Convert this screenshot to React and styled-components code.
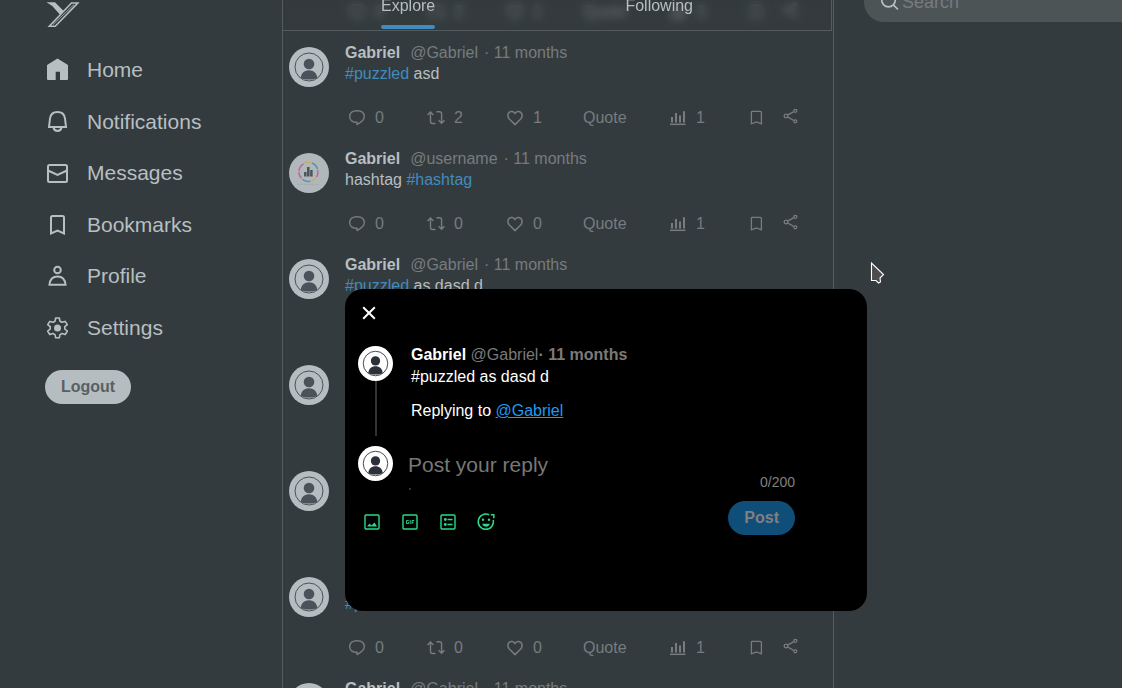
import React from "react";
import styled, { createGlobalStyle } from "styled-components";

const c = {
  bg: "#343b3e",
  text: "#b7bfc2",
  muted: "#767c7f",
  line: "#555c5f",
  blue: "#428bbd",
  field: "#4d5456",
  ink: "#4b5259",
};

const GlobalStyle = createGlobalStyle`
  * { box-sizing: border-box; }
  body {
    margin: 0;
    background: ${c.bg};
    color: ${c.text};
    font-family: "Liberation Sans", Arial, sans-serif;
    font-size: 16px;
    overflow: hidden;
  }
  button { font: inherit; color: inherit; border: 0; background: none; padding: 0; cursor: pointer; }
  a { text-decoration: none; color: inherit; }
  p { margin: 0; }
  svg { display: block; flex: none; }
`;

const Shell = styled.div`
  display: grid;
  grid-template-columns: minmax(0, 282fr) minmax(0, 552fr) minmax(0, 288fr);
  height: 100vh;
  overflow: hidden;
`;

/* ---------- sidebar ---------- */
const Sidebar = styled.header`
  padding: 2px 16px 0 45px;
`;
const Logo = styled.a`
  display: block;
  height: 56px;
`;
const Nav = styled.nav`
  display: flex;
  flex-direction: column;
  justify-content: space-between;
  height: 282px;
`;
const NavLink = styled.a`
  display: flex;
  align-items: center;
  gap: 18px;
  font-size: 21px;
  line-height: 24px;
`;
const Pill = styled.button`
  height: 34px;
  padding: 0 16px;
  border-radius: 17px;
  font-weight: 700;
  background: ${(p) => p.$bg};
  color: ${(p) => p.$fg};
`;
const LogoutButton = styled(Pill)`
  margin-top: 30px;
`;

/* ---------- feed ---------- */
const Feed = styled.main`
  position: relative;
  border: solid ${c.line};
  border-width: 0 1px;
`;
const Tabs = styled.div`
  position: absolute;
  z-index: 1;
  top: -21px;
  left: 0;
  right: 1px;
  height: 52px;
  display: flex;
  align-items: flex-end;
  justify-content: space-between;
  padding: 0 138px 1px 98px;
  border: solid ${c.line};
  border-width: 0 1px 1px 0;
  background: rgba(52, 59, 62, 0.15);
  backdrop-filter: blur(4px);
`;
const Tab = styled.button`
  line-height: 18px;
  padding-bottom: 10px;
  border-bottom: 4px solid transparent;
  position: relative;
  &::after {
    content: "";
    position: absolute;
    left: 0;
    right: 0;
    bottom: -4px;
    height: 4px;
    border-radius: 2px;
    background: ${(p) => (p.$active ? c.blue : "transparent")};
  }
`;
const PostList = styled.div`
  margin-top: -65px;
`;
const Post = styled.article`
  display: flex;
  gap: 16px;
  height: 106px;
  padding: 1px 16px 0 6px;
`;
const AvatarSlot = styled.div`
  padding-top: 5px;
`;
const PostBody = styled.div`
  flex: 1;
  min-width: 0;
  line-height: 21px;
`;
const Byline = styled.div`
  display: flex;
  color: ${c.muted};
`;
const Name = styled.strong`
  color: ${c.text};
  margin-right: 10px;
`;
const Handle = styled.span`
  margin-right: 6px;
`;
const Hashtag = styled.a`
  color: ${c.blue};
`;
const Actions = styled.div`
  display: grid;
  grid-template-columns: 79px 79px 77px 86px 79px 35px 18px;
  align-items: center;
  height: 24px;
  margin: 22px 0 0 3px;
  color: ${c.muted};
`;
const Action = styled.button`
  display: flex;
  align-items: center;
  gap: 9px;
  line-height: 18px;
`;

/* ---------- search ---------- */
const Aside = styled.aside`
  padding-left: 30px;
`;
const SearchBox = styled.label`
  display: flex;
  align-items: center;
  gap: 2px;
  width: 320px;
  height: 40px;
  margin-top: -18px;
  padding-left: 16px;
  border-radius: 20px;
  background: ${c.field};
`;
const SearchInput = styled.input`
  flex: 1;
  min-width: 0;
  padding: 0;
  border: 0;
  outline: 0;
  background: none;
  font: inherit;
  font-size: 18px;
  color: ${c.text};
  &::placeholder { color: ${c.muted}; opacity: 1; }
`;

/* ---------- reply dialog ---------- */
const Dialog = styled.section`
  position: fixed;
  z-index: 2;
  left: 345px;
  top: 289px;
  width: 522px;
  min-height: 322px;
  padding: 17px 72px 0 13px;
  border-radius: 18px;
  background: #000;
  color: #fff;
`;
const CloseButton = styled.button`
  display: block;
  padding: 0 4px;
`;
const Quoted = styled.div`
  display: flex;
  gap: 18px;
  height: 100px;
  margin-top: 26px;
`;
const Thread = styled.div`
  display: flex;
  flex-direction: column;
  align-items: center;
`;
const ThreadLine = styled.div`
  width: 2px;
  height: 55px;
  background: #333;
`;
const QuotedBody = styled.div`
  padding-top: 1px;
  line-height: 16px;
`;
const QuotedText = styled.p`
  line-height: 18px;
  margin-top: 5px;
`;
const Replying = styled.p`
  line-height: 18px;
  margin-top: 16px;
  a { color: #1d9bf0; text-decoration: underline; }
`;
const Soft = styled.span`
  color: #7a7a7a;
`;
const Composer = styled.div`
  display: flex;
  gap: 15px;
  height: 44px;
`;
const ComposerField = styled.div`
  flex: 1;
`;
const ReplyInput = styled.textarea`
  display: block;
  width: 100%;
  height: 42px;
  padding: 7px 0 0;
  border: 0;
  outline: 0;
  resize: none;
  overflow: hidden;
  background: none;
  color: #fff;
  font: inherit;
  font-size: 21px;
  line-height: 24px;
  &::placeholder { color: #777; opacity: 1; }
`;
const MediaStub = styled.div`
  width: 2px;
  height: 2px;
  margin-left: 1px;
  background: #333;
`;
const Footer = styled.div`
  display: flex;
  justify-content: space-between;
`;
const Tools = styled.div`
  display: flex;
  gap: 18px;
  padding: 20px 0 0 4px;
  height: 44px;
  color: #2bd98c;
`;
const Submit = styled.div`
  display: flex;
  flex-direction: column;
  align-items: flex-end;
  gap: 11px;
  margin-top: -16px;
`;
const Counter = styled.span`
  font-size: 14px;
  line-height: 16px;
  color: #808080;
`;
const Pointer = styled.svg`
  position: fixed;
  z-index: 3;
  left: 870px;
  top: 261px;
`;

const Svg = ({ size = 24, box = 24, sw = 2, children, ...rest }) => (
  <svg width={size} height={size} viewBox={`0 0 ${box} ${box}`} fill="none" stroke="currentColor" strokeWidth={sw} aria-hidden="true" {...rest}>
    {children}
  </svg>
);

const navItems = [
  ["Home", <path key="i" d="M12.500 0.500 L23 7 V21 Q23 22 22 22 H15 V13.700 H10.700 V22 H3 Q2 22 2 21 V7 Z" fill="currentColor" stroke="none" />],
  ["Notifications", <g key="i"><path d="M4 17 L5 8.500 C5.500 4.500 8.500 2 12.500 2 C16.500 2 19.500 4.500 20 8.500 L21 17 Z" /><path d="M8.500 17.500 C9 20 10.500 21 12.500 21 C14.500 21 16 20 16.500 17.500" /></g>],
  ["Messages", <g key="i"><rect x="3" y="4" width="19" height="17" rx="1.500" /><path d="M3 9.500 L12.500 14 L22 9.500" /></g>],
  ["Bookmarks", <path key="i" d="M6 20.500 V4.500 Q6 3 7.500 3 H17.500 Q19 3 19 4.500 V20.500 L12.500 17.500 Z" />],
  ["Profile", <g key="i"><circle cx="12.500" cy="6" r="3.300" /><path d="M4.500 20.700 C5 15.500 8 12.600 12.500 12.600 C17 12.600 20 15.500 20.500 20.700 Z" /></g>],
  ["Settings", <g key="i"><path strokeWidth="1.600" strokeLinejoin="round" d="M10.700 2 H14.300 L15 5.200 L17 6.300 L20.200 5.400 L22.300 8.600 L19.800 10.700 V13 L22.300 15.200 L20.200 18.500 L17 17.500 L15 18.600 L14.300 21.800 H10.700 L10 18.600 L8 17.500 L4.800 18.500 L2.700 15.200 L5.200 13 V10.700 L2.700 8.600 L4.800 5.400 L8 6.300 L10 5.200 Z" /><circle cx="12.500" cy="11.900" r="3.500" fill="currentColor" stroke="none" /></g>],
];

const CommentIcon = () => (
  <Svg size={18} box={18} sw={1.4}><path strokeLinejoin="round" d="M9 1.700 C13.600 1.700 16.300 3.900 16.300 7.700 C16.300 11 13.400 13.100 9 15.600 V13.300 C4.500 13.500 1.700 11.300 1.700 7.700 C1.700 3.900 4.500 1.700 9 1.700 Z" /></Svg>
);
const RepostIcon = () => (
  <Svg size={18} box={18} sw={1.4}><path d="M0.600 6 L3.500 3.100 L6.400 6 M3.500 3.500 V12.500 Q3.500 14.500 5.500 14.500 H8.500 M9.500 2.700 H12.500 Q14.600 2.700 14.600 4.700 V13.800 M11.700 11.300 L14.600 14.200 L17.500 11.300" /></Svg>
);
const HeartIcon = () => (
  <Svg size={18} box={18} sw={1.5}><path strokeLinejoin="round" d="M9 15.600 L3.300 10 C1.500 8 1.400 5 3.200 3.400 C5 1.900 7.500 2.300 9 4.700 C10.500 2.300 13 1.900 14.800 3.400 C16.600 5 16.500 8 14.700 10 Z" /></Svg>
);
const ChartIcon = () => (
  <Svg size={18} box={18} sw={2}><path d="M3 13.500 V8 M7 13.500 V4 M11 13.500 V6.500 M15 13.500 V2.200" /><path strokeWidth="1.500" d="M1 15.300 H16.500" /></Svg>
);
const SaveIcon = () => (
  <Svg size={18} box={18} sw={1.3}><path d="M3.400 14.900 V3.400 Q3.400 2.300 4.500 2.300 H12.300 Q13.400 2.300 13.400 3.400 V14.900 L8.400 12.900 Z" /></Svg>
);
const ShareIcon = () => (
  <Svg size={18} box={18} sw={1.3}><circle cx="3" cy="7" r="1.800" /><circle cx="12.300" cy="1.800" r="1.500" /><circle cx="12.300" cy="12.300" r="1.500" /><path d="M4.500 6.100 L10.900 2.600 M4.500 7.900 L10.900 11.500" /></Svg>
);

function Avatar({ size, disc = "#b5bdc0", ink = c.ink }) {
  return (
    <svg width={size} height={size} viewBox="0 0 40 40" role="img" aria-label="Gabriel">
      <circle cx="20" cy="20" r="20" fill={disc} />
      <circle cx="20" cy="20" r="14" fill="none" stroke={ink} strokeWidth="1" />
      <circle cx="20" cy="17" r="5.300" fill={ink} />
      <path d="M11.800 31 C12 26 15.500 23.200 20 23.200 C24.500 23.200 28 26 28.200 31 C23.500 33 16.500 33 11.800 31 Z" fill={ink} />
    </svg>
  );
}

function ChartAvatar() {
  return (
    <svg width="40" height="40" viewBox="0 0 40 40" role="img" aria-label="Gabriel">
      <circle cx="20" cy="20" r="20" fill="#b0b8bb" />
      <g fill="none" strokeWidth="1.500">
        <path stroke="#b8689b" d="M10 18 A9.500 9.500 0 0 1 14.500 10.800" />
        <path stroke="#c7ad65" d="M15.500 10.200 A9.500 9.500 0 0 1 22 9.700" />
        <path stroke="#5595ad" d="M23 10 A9.500 9.500 0 0 1 28.500 16" />
        <path stroke="#b8689b" d="M28.700 17 A9.500 9.500 0 0 1 27.500 24" />
        <path stroke="#c7ad65" d="M27 25 A9.500 9.500 0 0 1 22.500 28" />
        <path stroke="#5595ad" d="M21.500 28.300 A9.500 9.500 0 0 1 13.500 26.300" />
        <path stroke="#b8689b" d="M12.500 25.300 A9.500 9.500 0 0 1 9.800 19" />
      </g>
      <path d="M16.300 23.500 V19 M19.300 23.500 V14 M22.400 23.500 V17" stroke="#4c5358" strokeWidth="2.500" />
      <path d="M9 31.300 H31" stroke="#9aa2a5" strokeWidth="1" strokeDasharray="1 1" />
    </svg>
  );
}

const tag = (t) => <Hashtag href="#tag">{t}</Hashtag>;
const posts = [
  { handle: "@Gabriel", body: <>{tag("#puzzled")} asd</>, stats: [0, 2, 1, 3] },
  { handle: "@Gabriel", body: <>{tag("#puzzled")} asd</>, stats: [0, 2, 1, 1] },
  { handle: "@username", body: <>hashtag {tag("#hashtag")}</>, stats: [0, 0, 0, 1], chart: true },
  { handle: "@Gabriel", body: <>{tag("#puzzled")} as dasd d</>, stats: [0, 0, 0, 1] },
  { handle: "@Gabriel", body: <>{tag("#puzzled")} asd</>, stats: [0, 0, 0, 1] },
  { handle: "@Gabriel", body: <>{tag("#puzzled")} asd</>, stats: [0, 0, 0, 1] },
  { handle: "@Gabriel", body: <>{tag("#puzzled")} asd</>, stats: [0, 0, 0, 1] },
  { handle: "@Gabriel", body: <>{tag("#puzzled")} asd</>, stats: [0, 0, 0, 1] },
];

function PostItem({ post }) {
  const [replies, reposts, likes, views] = post.stats;
  return (
    <Post>
      <AvatarSlot>{post.chart ? <ChartAvatar /> : <Avatar size={40} />}</AvatarSlot>
      <PostBody>
        <Byline>
          <Name>Gabriel</Name>
          <Handle>{post.handle}</Handle>
          <span>· 11 months</span>
        </Byline>
        <p>{post.body}</p>
        <Actions>
          <Action aria-label="Reply"><CommentIcon />{replies}</Action>
          <Action aria-label="Repost"><RepostIcon />{reposts}</Action>
          <Action aria-label="Like"><HeartIcon />{likes}</Action>
          <Action>Quote</Action>
          <Action aria-label="Views"><ChartIcon />{views}</Action>
          <Action aria-label="Bookmark"><SaveIcon /></Action>
          <Action aria-label="Share"><ShareIcon /></Action>
        </Actions>
      </PostBody>
    </Post>
  );
}

function ReplyDialog() {
  return (
    <Dialog role="dialog" aria-label="Reply">
      <CloseButton aria-label="Close">
        <Svg size={14} box={14} sw={2}><path d="M1.200 1.200 L12.800 12.800 M12.800 1.200 L1.200 12.800" /></Svg>
      </CloseButton>
      <Quoted>
        <Thread>
          <Avatar size={35} disc="#fff" ink="#2c3038" />
          <ThreadLine />
        </Thread>
        <QuotedBody>
          <div><strong>Gabriel</strong> <Soft>@Gabriel<strong>· 11 months</strong></Soft></div>
          <QuotedText>#puzzled as dasd d</QuotedText>
          <Replying>Replying to <a href="#profile">@Gabriel</a></Replying>
        </QuotedBody>
      </Quoted>
      <Composer>
        <Avatar size={35} disc="#fff" ink="#2c3038" />
        <ComposerField>
          <ReplyInput aria-label="Post your reply" placeholder="Post your reply" />
          <MediaStub />
        </ComposerField>
      </Composer>
      <Footer>
        <Tools>
          <button aria-label="Add image">
            <Svg size={20} box={20} sw={1.4}><rect x="3" y="3" width="14" height="14" rx="1" /><path d="M5 14.500 L7.500 11.500 L9.500 13.500 L12.500 10.500 L15 14.500 Z" fill="currentColor" stroke="none" /></Svg>
          </button>
          <button aria-label="Add GIF">
            <Svg size={20} box={20} sw={1.4}><rect x="3" y="3" width="14" height="14" rx="1" /><path strokeWidth="0.900" d="M8.700 8.500 H6.500 V11.500 H8.500 V10 M10.200 8 V12 M12 12 V8.500 H14.200 M12 10.200 H13.700" /></Svg>
          </button>
          <button aria-label="Add poll">
            <Svg size={20} box={20} sw={1.4}><rect x="3" y="3" width="14" height="14" rx="1" /><circle cx="7.300" cy="7.500" r="1.400" fill="currentColor" stroke="none" /><circle cx="7.300" cy="12.500" r="1.400" fill="currentColor" stroke="none" /><path d="M9.500 7.500 H14.500 M9.500 12.500 H14.500" strokeWidth="1.300" /></Svg>
          </button>
          <button aria-label="Add emoji">
            <Svg size={20} box={20} sw={1.5}><path d="M13 2.800 A7.600 7.600 0 1 0 17.200 8" /><circle cx="7" cy="7.800" r="1.200" fill="currentColor" stroke="none" /><circle cx="13" cy="7.800" r="1.200" fill="currentColor" stroke="none" /><path d="M6.200 11.800 H13.800 C13 15.600 7 15.600 6.200 11.800 Z" fill="currentColor" stroke="none" /><path d="M14.800 2.800 H17.800 V6.300" /></Svg>
          </button>
        </Tools>
        <Submit>
          <Counter>0/200</Counter>
          <Pill $bg="#0f4e78" $fg="#808080">Post</Pill>
        </Submit>
      </Footer>
    </Dialog>
  );
}

export default function App() {
  return (
    <>
      <GlobalStyle />
      <Shell>
        <Sidebar>
          <Logo href="#home" aria-label="Start page">
            <svg width="36" height="26" viewBox="0 0 36 26" fill="none">
              <path d="M1.500 0.200 H10 L18.700 9 L15.500 13.300 L7.300 4 Z" fill={c.text} />
              <path d="M4.300 24.200 L26.500 1 H32.800 L10.200 24.200 Z" stroke={c.text} strokeWidth="1.600" />
              <path d="M8 22.500 L29 2.500" stroke={c.text} strokeWidth="0.800" />
            </svg>
          </Logo>
          <Nav>
            {navItems.map(([label, icon]) => (
              <NavLink href="#nav" key={label}><Svg>{icon}</Svg>{label}</NavLink>
            ))}
          </Nav>
          <LogoutButton $bg="#b5bdc0" $fg="#596063">Logout</LogoutButton>
        </Sidebar>
        <Feed>
          <Tabs>
            <Tab $active>Explore</Tab>
            <Tab>Following</Tab>
          </Tabs>
          <PostList>
            {posts.map((post, i) => <PostItem post={post} key={i} />)}
          </PostList>
        </Feed>
        <Aside>
          <SearchBox>
            <Svg size={20} box={20} sw={1.7}><circle cx="8.500" cy="8" r="6.800" /><path d="M13.300 12.800 L18 17.500" /></Svg>
            <SearchInput type="search" placeholder="Search" aria-label="Search" />
          </SearchBox>
        </Aside>
      </Shell>
      <ReplyDialog />
      <Pointer width="16" height="26" viewBox="0 0 16 26" aria-hidden="true">
        <path d="M1.500 2 V19.500 H6 L8.500 22 L10.500 21 L10 17 L13.500 13.500 Z" fill="#4d4d4d" stroke="#fff" strokeWidth="1.100" />
      </Pointer>
    </>
  );
}
